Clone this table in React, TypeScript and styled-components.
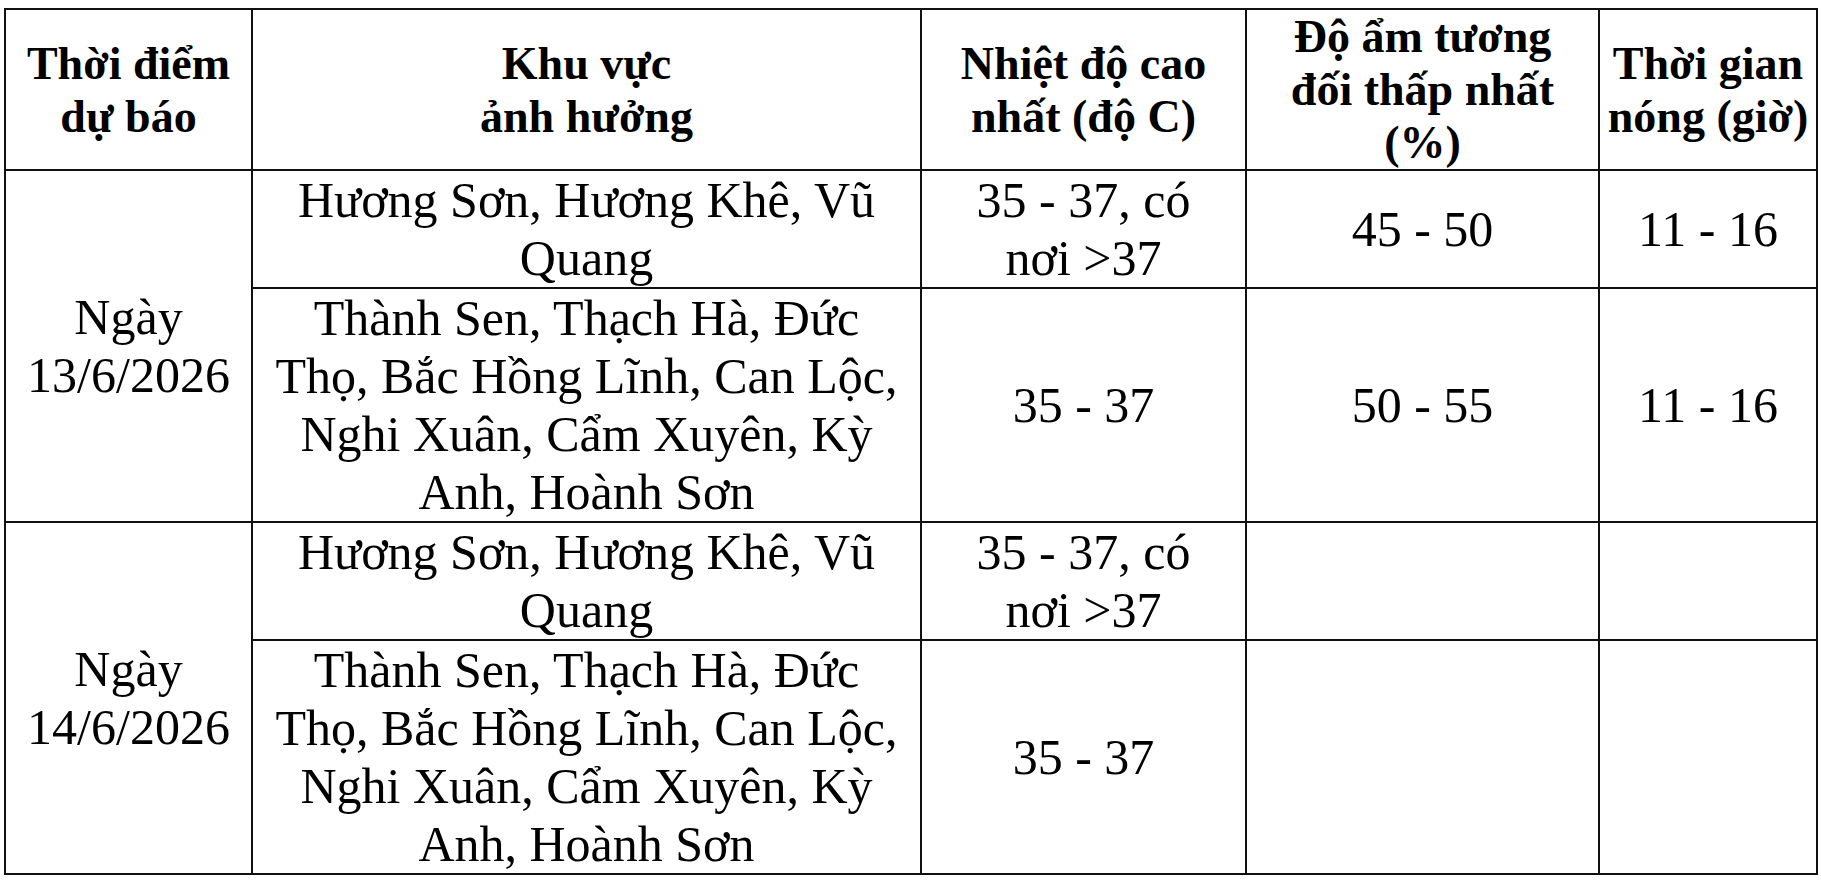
import React from 'react';
import styled, { createGlobalStyle } from 'styled-components';

const GlobalStyle = createGlobalStyle`
  html, body {
    margin: 0;
    padding: 0;
    background: #ffffff;
  }
  body {
    font-family: 'Liberation Serif', 'Times New Roman', serif;
    color: #000;
  }
`;

type Region = {
  area: string[];
  temp: string[];
  humidity?: string;
  hours?: string;
};

const days: { date: string[]; regions: Region[] }[] = [
  {
    date: ['Ngày', '13/6/2026'],
    regions: [
      {
        area: ['Hương Sơn, Hương Khê, Vũ', 'Quang'],
        temp: ['35 - 37, có', 'nơi >37'],
        humidity: '45 - 50',
        hours: '11 - 16',
      },
      {
        area: ['Thành Sen, Thạch Hà, Đức', 'Thọ, Bắc Hồng Lĩnh, Can Lộc,', 'Nghi Xuân, Cẩm Xuyên, Kỳ', 'Anh, Hoành Sơn'],
        temp: ['35 - 37'],
        humidity: '50 - 55',
        hours: '11 - 16',
      },
    ],
  },
  {
    date: ['Ngày', '14/6/2026'],
    regions: [
      {
        area: ['Hương Sơn, Hương Khê, Vũ', 'Quang'],
        temp: ['35 - 37, có', 'nơi >37'],
      },
      {
        area: ['Thành Sen, Thạch Hà, Đức', 'Thọ, Bắc Hồng Lĩnh, Can Lộc,', 'Nghi Xuân, Cẩm Xuyên, Kỳ', 'Anh, Hoành Sơn'],
        temp: ['35 - 37'],
      },
    ],
  },
];

const headers = [
  ['Thời điểm', 'dự báo'],
  ['Khu vực', 'ảnh hưởng'],
  ['Nhiệt độ cao', 'nhất (độ C)'],
  ['Độ ẩm tương', 'đối thấp nhất', '(%)'],
  ['Thời gian', 'nóng (giờ)'],
];

const colWidths = [247, 669, 325, 353, 218];

function Lines({ lines }: { lines: string[] }) {
  return (
    <>
      {lines.map((line, i) => (
        <React.Fragment key={i}>
          {i > 0 && <br />}
          {line}
        </React.Fragment>
      ))}
    </>
  );
}

export default function App() {
  return (
    <Wrapper>
      <GlobalStyle />
      <Table>
        <colgroup>
          {colWidths.map((w, i) => (
            <col key={i} style={{ width: w }} />
          ))}
        </colgroup>
        <thead>
          <HeadRow>
            {headers.map((h, i) => (
              <Th key={i}>
                <Lines lines={h} />
              </Th>
            ))}
          </HeadRow>
        </thead>
        <tbody>
          {days.map((day) =>
            day.regions.map((region, index) => (
              <BodyRow key={day.date[1] + index} $lines={region.area.length}>
                {index === 0 && (
                  <Td rowSpan={day.regions.length}>
                    <Lines lines={day.date} />
                  </Td>
                )}
                <Td>
                  <Lines lines={region.area} />
                </Td>
                <Td>
                  <Lines lines={region.temp} />
                </Td>
                <Td>{region.humidity}</Td>
                <Td>{region.hours}</Td>
              </BodyRow>
            ))
          )}
        </tbody>
      </Table>
    </Wrapper>
  );
}

const Wrapper = styled.div`
  padding: 8px 0 0 4px;
`;

const Table = styled.table`
  border-collapse: collapse;
  table-layout: fixed;
  width: 1812px;
  border: 2px solid #111;
`;

const HeadRow = styled.tr`
  height: 161px;
`;

const BodyRow = styled.tr<{ $lines: number }>`
  height: ${(p) => (p.$lines > 2 ? 234 : 118)}px;
`;

const Th = styled.th`
  border: 2px solid #111;
  padding: 0 4px;
  text-align: center;
  vertical-align: middle;
  font-family: 'Liberation Serif', 'Times New Roman', serif;
  font-weight: 700;
  font-size: 46px;
  line-height: 53px;
  white-space: nowrap;
`;

const Td = styled.td`
  border: 2px solid #111;
  padding: 0 4px;
  text-align: center;
  vertical-align: middle;
  font-family: 'Liberation Serif', 'Times New Roman', serif;
  font-weight: 400;
  font-size: 50px;
  line-height: 58px;
  white-space: nowrap;
`;
